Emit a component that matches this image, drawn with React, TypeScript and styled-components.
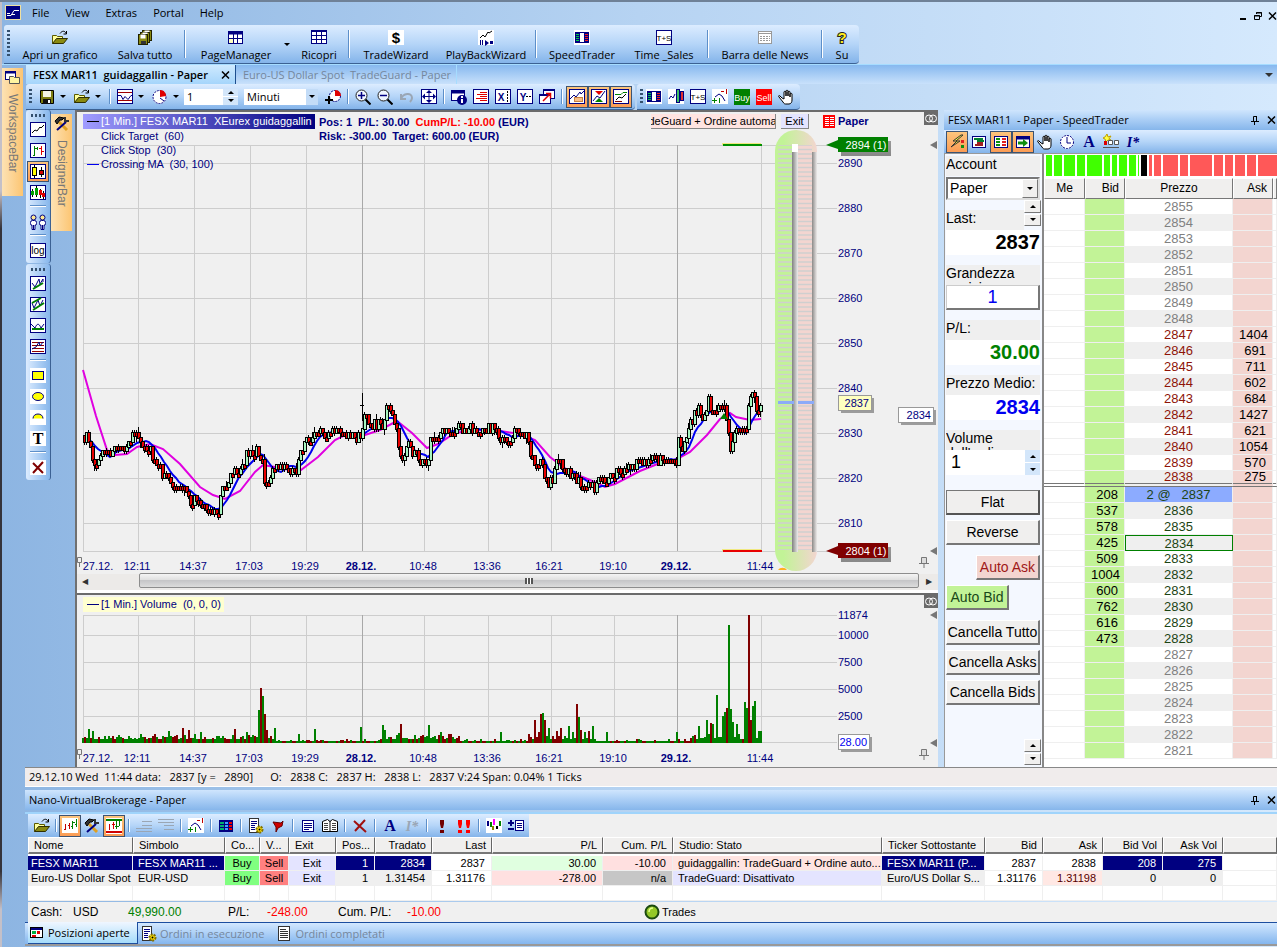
import React from 'react';
import styled, { createGlobalStyle, css } from 'styled-components';

const NAVY = '#000080';
const UI = '"Open Sans", "Noto Sans", sans-serif';
const ARIAL = '"Liberation Sans", Arial, sans-serif';
const BAR = 'linear-gradient(#dcecff, #b5d5f8 50%, #84b4ea)';
const CAPTION = 'linear-gradient(#cfe5fd, #a9cdf5 50%, #86b6eb)';
const HOT = 'linear-gradient(#fdc57c, #fb9c55)';

const Global = createGlobalStyle`
  *, *::before, *::after { box-sizing: border-box; }
  html, body { margin: 0; background: #8db5e2; }
  button, input, select { font: inherit; color: inherit; margin: 0; padding: 0; border: 0; border-radius: 0; background: none; }
  button { display: block; }
  svg { display: block; flex: none; }
`;

/* ---------- icons ---------- */

const Frame = () => <rect x="0.5" y="0.5" width="15" height="14" fill="#fff" stroke={NAVY} />;
const White = () => <rect width="16" height="15" fill="#fff" />;
const Depth = () => (
  <>
    <rect x="1" y="2" width="14" height="11" fill={NAVY} />
    <rect x="6" y="3" width="4" height="9" fill="#fff" />
    <path d="M2 4.500h3M2 6.500h3M2 8.500h3M2 10.500h3" stroke="#00d040" />
    <path d="M11 4.500h3M11 6.500h3M11 8.500h3M11 10.500h3" stroke="#f02020" />
  </>
);
const Glyph = ({ x = 8, y = 12, size = 12, fill = '#000', w = 'bold', f = ARIAL, i = false, children }: {
  x?: number; y?: number; size?: number; fill?: string; w?: string; f?: string; i?: boolean; children: string;
}) => (
  <text x={x} y={y} fontSize={size} fill={fill} fontWeight={w} fontFamily={f} fontStyle={i ? 'italic' : 'normal'} textAnchor="middle">{children}</text>
);
const SERIF = '"Liberation Serif", serif';
const Folder = () => (
  <>
    <path d="M0.500 13.500V5.500h4l1 1h5v2" fill="#ffff9c" stroke="#5a5a00" />
    <path d="M0.500 13.500l4-5h11l-4 5z" fill="#8a8a10" stroke="#2e2e00" />
    <path d="M8 3.500c2-3 5-3 6 0M14.500 1v3h-3" fill="none" stroke="#000" />
  </>
);
const Hand = () => (
  <path d="M4 9L2 7c-1-1-2 0-1 1l4 5c1 2 2 2 3 2h3c2 0 3-2 3-4V5c0-1-2-1-2 0v3V3c0-1-2-1-2 0v4V2c0-1-2-1-2 0v5V3c0-1-2-1-2 0v7z" fill="#fff" stroke="#000" />
);
const Zig = ({ c = '#000', d = 'M2 11l3-3 2 1 3-4 1 1 3-3' }) => <path d={d} fill="none" stroke={c} />;
const Gear = () => (
  <>
    <circle cx="11.500" cy="11.500" r="3" fill="#ffe000" stroke="#807000" strokeWidth="2" strokeDasharray="2 1" />
    <circle cx="11.500" cy="11.500" r="1" fill="#000" />
  </>
);
const Lens = ({ plus }: { plus: boolean }) => (
  <>
    <circle cx="6.500" cy="6.500" r="5.500" fill="#eef6ff" stroke="#222" />
    <path d={plus ? 'M3 6.500h7M6.500 3v7' : 'M3 6.500h7'} stroke={NAVY} strokeWidth="1.500" />
    <path d="M10.500 10.500l5 5" stroke="#000" strokeWidth="2" />
  </>
);
const Ticks = ({ cx, cy }: { cx: number; cy: number }) => (
  <circle cx={cx} cy={cy} r="6.500" fill="none" stroke={NAVY} strokeDasharray="2 1" />
);

const icons: Record<string, React.ReactNode> = {
  app: <><rect x="0.500" y="0.500" width="15" height="14" fill={NAVY} stroke="#f0e0a0" /><path d="M2 10.500h4l3-5h5M2 8.500h3M6 9.500h4" fill="none" stroke="#fff" /></>,
  folder: <Folder />,
  saveall: <>{[[5.5, 0.5], [3.5, 2.5], [1.5, 4.5]].map(([x, y]) => <g key={x}><rect x={x} y={y} width="9" height="10" fill="#8a8a10" stroke="#222200" /><rect x={x + 2} y={y} width="5" height="4" fill="#fff" /></g>)}<rect x="4" y="11" width="5" height="3" fill="#333" /></>,
  pages: <><rect x="0.500" y="1.500" width="14" height="12" fill="#fff" stroke={NAVY} /><path d="M0 3h15" stroke={NAVY} strokeWidth="3" /><path d="M5.500 4v9M9.500 4v9M1 8.500h14" stroke={NAVY} /><rect x="1" y="9" width="4" height="4" fill="#ffffc0" /></>,
  grid: <><rect x="0.500" y="0.500" width="15" height="13" fill="#fff" stroke={NAVY} /><path d="M0 1.500h16M5.500 0v14M10.500 0v14M0 5.500h16M0 9.500h16" stroke={NAVY} /></>,
  dollar: <><White /><Glyph y={13} size={15}>$</Glyph></>,
  playback: <><White /><Zig d="M2 8l3-3 2 2 3-5 1 1 3-2" /><path d="M2.500 10v5M4.500 10v5" stroke={NAVY} /><path d="M7 10l4 3-4 3zM12 11h3v3h-3z" fill={NAVY} /></>,
  speed: <><White /><Depth /></>,
  ts: <><Frame /><Glyph size={8} y={11} w="normal">T+S</Glyph></>,
  news: <><rect x="1.500" y="1.500" width="13" height="12" fill="#fff" stroke="#999" /><path d="M2 3.500h12" stroke="#999" /><path d="M3 6.500h10M3 8.500h10M3 10.500h10" stroke="#999" strokeDasharray="2 1" /></>,
  help: <text x="8" y="13" fontSize="15" fontWeight="bold" fontFamily={ARIAL} textAnchor="middle" fill="#ffef20" stroke="#222" strokeWidth="2" paintOrder="stroke">?</text>,
  disk: <><path d="M1.500 1.500h13v13h-12l-1-1z" fill="#7d7d10" stroke="#000" /><rect x="4" y="2" width="8" height="6" fill="#f4f4e4" /><rect x="4" y="10" width="8" height="5" fill="#111" /><rect x="9" y="11" width="2" height="3" fill="#fff" /></>,
  indic: <><Frame /><path d="M1 3.500h14M1 11.500h14" stroke="#a00000" /><Zig c={NAVY} d="M1 6.500h3l2 4 2-3 3 3 3-4h2" /></>,
  pie: <><circle cx="7.500" cy="8" r="7" fill="#fff" /><Ticks cx={7.5} cy={8} /><path d="M8 8V1c4 0 6 3 6 6z" fill="#e00000" /><path d="M8 9l4 3" stroke={NAVY} /></>,
  addpie: <><circle cx="10" cy="7" r="5.500" fill="#fff" stroke={NAVY} strokeDasharray="2 1" /><path d="M10 7V1c4 0 6 3 6 6z" fill="#e00000" /><path d="M0 11h8M4 7v8" stroke="#000" strokeWidth="2" /></>,
  zoomin: <Lens plus />,
  zoomout: <Lens plus={false} />,
  undo: <path d="M2 5v5h5M2 10c2-6 11-7 11-1 0 2-1 3-2 4" fill="none" stroke="#9aa6b4" strokeWidth="2" />,
  move: <><Frame /><path d="M8 2v11M2 7.500h12" stroke={NAVY} /><path d="M8 1l3 3H5zM8 14l-3-3h6zM1 7.500l3-3v6zM15 7.500l-3 3v-6z" fill={NAVY} /></>,
  info: <><rect x="0.500" y="1.500" width="13" height="10" fill="#fff" stroke={NAVY} /><path d="M0 3h14" stroke={NAVY} strokeWidth="3" /><circle cx="11" cy="11" r="5" fill={NAVY} /><path d="M11 7v2M11 10v4" stroke="#fff" strokeWidth="2" /></>,
  lines: <><Frame /><path d="M7 3.500h7M4 5.500h10M7 7.500h7M3 9.500h11M7 11.500h7" stroke="#e00000" /></>,
  xline: <><Frame /><Glyph x={6} y={12} size={10} fill={NAVY}>X</Glyph><path d="M12.500 2v12" stroke="#000" strokeDasharray="2 1" /></>,
  yline: <><Frame /><Glyph x={6} y={12} size={10} fill={NAVY}>Y</Glyph><path d="M9 7.500h6" stroke="#000" strokeDasharray="2 1" /></>,
  layers: <><rect x="4.500" y="0.500" width="11" height="9" fill="#fff" stroke={NAVY} /><rect x="0.500" y="5.500" width="11" height="9" fill="#fff" stroke={NAVY} /><path d="M1 6.500h11M5 1.500h11" stroke={NAVY} /><path d="M4 12l7-7M7 4.500h4.500v5" stroke="#e00000" strokeWidth="1.500" fill="none" /></>,
  target: <><Frame /><rect x="5.500" y="8.500" width="8" height="4" fill="#f8c088" stroke="#c88040" /><Zig c={NAVY} d="M1 10l4-4 2 2 4-5 1 2 3-3" /></>,
  guard: <><Frame /><path d="M4 2h8l-4 4z" fill="#e00000" /><path d="M4 13h8l-4-4z" fill="#008000" /><Zig c={NAVY} d="M2 12l4-5 3 2 5-7" /></>,
  equity: <><Frame /><path d="M2 5.500h6l2-2h4" stroke="#008000" fill="none" /><path d="M2 12.500h7" stroke="#800000" /><Zig d="M3 11l3-3 3 1 4-4" /></>,
  chartdepth: <><White /><path d="M1 10l2-3 2 2 2-4" fill="none" stroke={NAVY} /><rect x="8.500" y="0.500" width="3" height="13" fill="#40c060" stroke={NAVY} /><rect x="12.500" y="2.500" width="3" height="9" fill="#e03030" stroke={NAVY} /></>,
  plusone: <><White /><Zig c={NAVY} d="M3 8l4-3 3 2 3 5" /><path d="M0 11.500h5M2.500 9v5M7.500 9v5" stroke="#008000" /><path d="M9 2.500h3M14.500 0v5" stroke="#c00000" /></>,
  buy: <><rect width="16" height="16" fill="#008000" /><Glyph size={9} y={12} fill="#fff" w="normal">Buy</Glyph></>,
  sell: <><rect width="16" height="16" fill="#f00" /><Glyph size={9} y={12} fill="#fff" w="normal">Sell</Glyph></>,
  hand: <Hand />,
  line: <><Frame /><Zig /></>,
  bars: <><Frame /><path d="M4.500 3v10M3 12.500h1M5 5.500h2" stroke="#008000" /><path d="M7.500 4v3" stroke="#008000" /><path d="M11.500 3v9M9 5.500h2M12 8.500h2" stroke="#e00000" /></>,
  candle: <><Frame /><path d="M4.500 1v13M11.500 3v10" stroke="#000" /><rect x="2.500" y="3.500" width="4" height="8" fill="#ffff00" stroke="#000" /><rect x="9.500" y="6.500" width="4" height="4" fill="#d00000" stroke="#000" /></>,
  candles: <><Frame /><path d="M2.500 4v8M6.500 1v11M10.500 4v9M13.500 6v8" stroke="#000" /><rect x="1" y="6" width="3" height="4" fill="#00a000" /><rect x="5" y="3" width="3" height="7" fill="#00a000" /><rect x="9" y="5" width="3" height="5" fill="#e00000" /><rect x="12" y="8" width="3" height="4" fill="#e00000" /></>,
  people: <>{[3.5, 12.5].map(x => <g key={x}><circle cx={x} cy="3.500" r="2.500" fill="#ffe890" stroke={NAVY} /><rect x={x - 3} y="6.500" width="6" height="5" rx="2" fill="#fff" stroke={NAVY} /><path d={`M${x - 1.5} 11v4.500h3V11M${x} 11v4`} fill="#fff" stroke={NAVY} /></g>)}</>,
  log: <><Frame /><Glyph size={10} y={11} w="normal">log</Glyph></>,
  trend: <><Frame /><Zig c={NAVY} d="M2 7l3 4 4-8 1 5 3-5v3" /><path d="M3 13l10-6" stroke="#008000" strokeWidth="2" /></>,
  channel: <><Frame /><Zig c={NAVY} d="M2 6l2 5 4-8 2 6 3-6" /><path d="M2 6l9-5M3 13l11-7" stroke="#008000" strokeWidth="2" /></>,
  arc: <><Frame /><Zig c={NAVY} d="M1 6l4 4c2-5 4-5 6 0l3-4" /><path d="M2 11h12" stroke="#008000" strokeWidth="2" /></>,
  fib: <><Frame /><path d="M2 3.500h12M2 6.500h12M2 9.500h12M2 12.500h12" stroke="#900000" /><Zig c={NAVY} d="M2 10l4-2 3-5 1 4 3-4" /></>,
  rect: <><White /><rect x="2.500" y="3.500" width="11" height="8" fill="#ff0" stroke={NAVY} /></>,
  ellipse: <><White /><ellipse cx="8" cy="7.500" rx="5.500" ry="4" fill="#ff0" stroke={NAVY} /></>,
  half: <><White /><path d="M3 8.500c0-6 10-6 10 0z" fill="#ff0" /><path d="M3 8.500c0-6 10-6 10 0" fill="none" stroke={NAVY} /></>,
  text: <><White /><Glyph size={16} y={13} f={SERIF}>T</Glyph></>,
  del: <><White /><path d="M3 3l10 10M13 2L3 13" stroke="#800000" strokeWidth="2" /></>,
  delbare: <path d="M2 3l12 11M13 2L3 13" stroke="#a01010" strokeWidth="2" />,
  hammer: <><path d="M5 6l8 8" stroke="#e0a020" strokeWidth="3" /><path d="M12 6L3 14" stroke={NAVY} strokeWidth="2" /><path d="M1 5l4-4 5 1-2 2-2 0-3 4z" fill="#333" stroke="#000" /><path d="M11 1v4h4" fill="none" stroke="#333" strokeWidth="2" /></>,
  bolt: <><path d="M12 1L4 7h4l-6 6 9-6H7l7-6z" fill="#ffff40" stroke="#333" /><rect x="12" y="6" width="3" height="3" fill="#e02020" /><rect x="12" y="11" width="3" height="3" fill="#109010" /></>,
  flagdoc: <><rect x="1.500" y="2.500" width="13" height="11" fill="#fff" stroke={NAVY} /><path d="M3 5h9M6 7h7" stroke="#008030" strokeWidth="2" /><path d="M6 9h6M4 11h8" stroke="#a02020" strokeWidth="2" /></>,
  docgrid: <><rect x="1.500" y="2.500" width="13" height="11" fill="#fff" stroke={NAVY} /><path d="M3 5h4M3 8h4M3 11h4" stroke="#109010" strokeWidth="2" /><path d="M9 5h4M9 8h4M9 11h4" stroke="#e02020" strokeWidth="2" /></>,
  arrowbox: <><rect x="1.500" y="2.500" width="13" height="11" fill="#fff" stroke={NAVY} /><path d="M1 4h14" stroke={NAVY} strokeWidth="3" /><path d="M3 9h6" stroke="#109010" strokeWidth="3" /><path d="M8 5l5 4-5 4z" fill="#109010" /></>,
  clock: <><circle cx="8" cy="8" r="7" fill="#fff" /><Ticks cx={8} cy={8} /><path d="M8 3v6h4" fill="none" stroke={NAVY} /></>,
  fontA: <Glyph size={16} y={13} f={SERIF} fill={NAVY}>A</Glyph>,
  istar: <Glyph size={14} y={13} f={SERIF} fill={NAVY} i>I*</Glyph>,
  istaroff: <Glyph size={14} y={13} f={SERIF} fill="#9aa6b4" i>I*</Glyph>,
  alarm: <><path d="M4 0l1 3 3-1-2 3 2 1-3 0-2 2-1-3-2-1 2-1z" fill="#ffff40" stroke="#c0a000" /><rect x="1" y="7" width="3" height="4" fill="#d00" /><path d="M5.500 6.500h4v4h-4zM11.500 6.500h4v4h-4zM0 13.500h16" fill="#fff" stroke="#555" /></>,
  chartwin: <><White /><path d="M3.500 6v6M2 11.500h1M7.500 5v6M6 7.500h1" stroke="#c00000" /><path d="M10.500 3v8M9 8.500h1M14.500 1v8M13 6.500h1M11 4.500h2" stroke="#008000" /></>,
  chartred: <><rect width="16" height="16" fill="#fff" /><path d="M0 2h16" stroke="#008000" strokeWidth="2" /><path d="M0 14h16" stroke="#d00000" strokeWidth="2" /><path d="M3.500 6v6M7.500 4v7M6 6.500h3" stroke="#d00000" /><path d="M10.500 3v8M13.500 3v5M9 8.500h4" stroke="#008000" /></>,
  rowsdn: <path d="M6 3.500h10M6 7.500h10M0 10.500h16M0 13.500h16" stroke="#9aa6b4" />,
  rowsup: <path d="M0 1.500h16M0 4.500h16M6 7.500h10M6 11.500h10" stroke="#9aa6b4" />,
  table3: <><rect x="1" y="2" width="14" height="12" fill={NAVY} /><path d="M2 5h4M2 8h4M2 11h4" stroke="#00b070" strokeWidth="2" /><path d="M7 5h3M7 8h3M7 11h3" stroke="#40a0ff" strokeWidth="2" /><path d="M11 5h3M11 8h3M11 11h3" stroke="#f00000" strokeWidth="2" /></>,
  listgear: <><rect x="1.500" y="0.500" width="9" height="14" fill="#fff" stroke="#333" /><path d="M3 3.500h6M3 5.500h6M3 7.500h4M3 9.500h4M3 11.500h4" stroke={NAVY} /><Gear /></>,
  flag: <path d="M3 4l8 1 2-2-1 5-4 2-2 4 0-5z" fill="#d00000" stroke="#600" />,
  list: <><rect x="2.500" y="2.500" width="11" height="11" fill="#fff" stroke={NAVY} /><path d="M4 5.500h8M4 7.500h8M4 9.500h8M4 11.500h5" stroke={NAVY} /></>,
  book: <><path d="M0.500 3.500l5-2 2.500 2 2.500-2 5 2v10H0.500zM8 3v11" fill="#fff" stroke="#000" /><path d="M2 5.500h4M2 7.500h4M2 9.500h4M2 11.500h4M10 5.500h4M10 7.500h4M10 9.500h4M10 11.500h4" stroke="#444" /></>,
  ex1: <><path d="M6 2h4v4l-1 4H7L6 6z" fill="#700000" /><rect x="6" y="12" width="4" height="3" fill="#700000" /></>,
  ex2: <>{[2, 10].map(x => <path key={x} d={`M${x} 2h4v4l-1 4h-2l-1-4zM${x} 12h4v3h-4z`} fill="#f00" />)}</>,
  wave: <><White /><path d="M2 3v5" stroke={NAVY} strokeWidth="2" /><path d="M5 4v5" stroke="#008000" strokeWidth="2" /><path d="M7 8v4" stroke="#908000" strokeWidth="2" /><path d="M8 1v6" stroke="#f0f" strokeWidth="2" /><path d="M11 8v3" stroke="#000" strokeWidth="2" /><path d="M14 3v5" stroke="#008000" strokeWidth="2" /></>,
  pmlist: <><path d="M0 5h6M3 2v6M0 11h6" stroke={NAVY} strokeWidth="2" /><rect x="7.500" y="2.500" width="8" height="10" fill="#fff" stroke={NAVY} /><path d="M9 5.500h5M9 7.500h5M9 9.500h5" stroke={NAVY} /></>,
  posz: <><rect x="1.500" y="2.500" width="12" height="10" fill="#fff" stroke="#000" /><rect x="2" y="3" width="11" height="2" fill={NAVY} /><rect x="3" y="6" width="4" height="3" fill="#00b040" /><rect x="8" y="6" width="3" height="3" fill="#e00000" /><rect x="3" y="10" width="4" height="2" fill="#e00000" /></>,
  doc: <><rect x="2.500" y="0.500" width="11" height="14" fill="#fff" stroke="#333" /><path d="M4 3.500h6M4 5.500h8M4 7.500h8M4 9.500h8M4 11.500h8" stroke="#333" /></>,
  chip: <><rect x="1" y="1" width="12" height="13" fill="#f00" /><path d="M3 3.500h4M3 5.500h4M3 7.500h4M3 9.500h4M3 11.500h4M8 3.500h4M8 5.500h4M8 7.500h4M8 9.500h4M8 11.500h4" stroke="#fff" /></>,
  window: <><rect x="0.500" y="1.500" width="10" height="8" fill="#fff" stroke={NAVY} /><path d="M0 2.500h11" stroke={NAVY} strokeWidth="2" /><path d="M4.500 13.500v-7h4l1 1h5v6z" fill="#fff4a0" stroke="#555" /></>,
};

const Icon = ({ name, size = 16 }: { name: string; size?: number }) => (
  <svg width={size} height={size} viewBox={`0 0 ${size} ${size}`} aria-hidden="true">{icons[name]}</svg>
);

/* ---------- frame ---------- */

const Page = styled.div`
  min-height: 100vh;
  display: flex;
  flex-direction: column;
  border-top: 2px solid #6f8197;
  padding-left: 2px;
  background:
    linear-gradient(#c4c0c8 20%, #35333a 24% 92%, #c4c0c8 96%) left / 2px 100% no-repeat,
    linear-gradient(90deg, #8db5e2, #b6d3f2 50%, #d5e9fd);
  font: 11px/15px ${UI};
  color: #000;
`;
const MenuBar = styled.header`
  display: flex;
  align-items: center;
  height: 23px;
  padding: 0 0 1px 3px;
  gap: 3px;
`;
const Menu = styled.nav`
  display: flex;
  flex: 1;
  button { padding: 0 8px; line-height: 20px; }
`;
const WinButtons = styled.div`
  display: flex;
  gap: 5px;
  padding-top: 6px;
`;
const BigBar = styled.div`
  display: flex;
  align-items: stretch;
  align-self: flex-start;
  height: 39px;
  margin-left: 2px;
  padding: 0 1px 0 3px;
  background: ${BAR};
  border-bottom: 1px solid #3b6193;
  border-radius: 3px 4px 4px 0;
`;
const Grip = styled.i<{ $flat?: boolean }>`
  flex: none;
  ${p => p.$flat
    ? css`width: 14px; height: 3px; margin: 3px 5px 2px; background: repeating-linear-gradient(90deg, #34506e 0 2px, transparent 2px 4px);`
    : css`width: 3px; margin: 5px 0; background: repeating-linear-gradient(#34506e 0 2px, transparent 2px 4px);`}
`;
const BigButton = styled.button<{ $w: number }>`
  display: flex;
  flex-direction: column;
  align-items: center;
  gap: 1px;
  width: ${p => p.$w}px;
  padding-top: 5px;
  line-height: 15px;
  white-space: nowrap;
`;
const Rule = styled.i<{ $gap?: number }>`
  flex: none;
  width: 2px;
  margin: 5px ${p => p.$gap ?? 3}px;
  background: linear-gradient(90deg, #5d8fc9 50%, #fff 50%);
`;
const Caret = styled.i<{ $l?: number; $r?: number; $size?: number; $c?: string }>`
  flex: none;
  align-self: center;
  border: ${p => p.$size ?? 3}px solid transparent;
  border-top-color: ${p => p.$c ?? '#000'};
  border-bottom: 0;
  margin: 0 ${p => p.$r ?? 5}px 0 ${p => p.$l ?? 2}px;
`;
const Body = styled.div`
  flex: 1;
  display: flex;
  border-top: 1px solid #a6dcff;
`;
const Side = styled.aside`
  flex: none;
  width: 23px;
  padding-top: 3px;
`;
const VTab = styled.button<{ $h: number }>`
  display: flex;
  flex-direction: column;
  align-items: center;
  gap: 8px;
  width: 21px;
  height: ${p => p.$h}px;
  padding-top: 2px;
  background: linear-gradient(90deg, #fde2b4, #fcc572);
  color: #777;
  font: 12px/16px ${ARIAL};
  span { writing-mode: vertical-rl; }
`;
const Work = styled.main`
  flex: 1;
  min-width: 0;
  display: flex;
  flex-direction: column;
`;
const TabStrip = styled.div`
  display: flex;
  align-items: stretch;
  height: 19px;
  margin-left: 1px;
  padding-right: 2px;
  background: linear-gradient(#86b8ef, #c9e1fb);
  white-space: pre;
`;
const Tab = styled.button<{ $on?: boolean }>`
  display: flex;
  align-items: center;
  justify-content: space-between;
  padding: 0 5px 0 7px;
  ${p => p.$on
    ? css`width: 210px; font-weight: 600; background: linear-gradient(#cfeaff, #a5d5fb); border-right: 1px solid #1d4e8f; color: #000;`
    : css`color: #75879d; border-right: 1px solid #a6dcff;`}
`;
const Fill = styled.span`flex: 1;`;
const Space = styled.span`flex: 0 0 4px;`;
const Track = styled.span`flex: 0 1 47px;`;
const ToolRow = styled.div`
  display: flex;
  gap: 2px;
  height: 26px;
  margin-left: 1px;
`;
const ToolBar = styled.div`
  display: flex;
  align-items: stretch;
  padding: 0 3px;
  background: ${BAR};
  border-bottom: 1px solid #3b6193;
  border-radius: 3px 4px 4px 0;
`;
const Tool = styled.button<{ $on?: boolean; $h?: number }>`
  flex: none;
  display: flex;
  align-items: center;
  justify-content: center;
  width: 22px;
  height: ${p => p.$h ?? 22}px;
  align-self: center;
  ${p => p.$on && css`background: ${HOT}; border: 1px solid #3c5372;`}
`;
const Field = styled.div<{ $w: number; $ml?: number }>`
  display: flex;
  align-self: center;
  width: ${p => p.$w}px;
  height: 16px;
  margin-left: ${p => p.$ml ?? 0}px;
  background: #fff;
  input, select { flex: 1; min-width: 0; padding-left: 3px; appearance: none; outline: 0; }
`;
const Steps = styled.div<{ $w?: number; $raised?: boolean }>`
  flex: none;
  display: flex;
  flex-direction: column;
  gap: 1px;
  width: ${p => p.$w ?? 15}px;
  button {
    flex: 1;
    display: flex;
    align-items: center;
    justify-content: center;
    background: #d3e6fa;
    ${p => p.$raised && css`background: #f0efee; border: 1px solid #fff; border-right: 1px solid #777; border-bottom: 1px solid #777;`}
  }
`;
const Tri = styled.i<{ $up?: boolean }>`
  border: 3px solid transparent;
  ${p => p.$up ? css`border-bottom-color: #000; border-top: 0;` : css`border-top-color: #000; border-bottom: 0;`}
`;
const DropMark = styled.span`
  display: flex;
  align-items: center;
  justify-content: center;
  width: 12px;
  background: #c3dcf7;
`;
const Middle = styled.div`
  display: flex;
  align-items: stretch;
`;
const ToolCol = styled.div`
  flex: none;
  width: 25px;
  margin-left: 1px;
  display: flex;
  flex-direction: column;
`;
const ToolStack = styled.div`
  display: flex;
  flex-direction: column;
  padding: 1px 0 2px;
  margin-bottom: 1px;
  background: linear-gradient(90deg, #dcecff, #86b6eb);
  border-right: 1px solid #3b6193;
  border-radius: 3px;
  hr { width: 16px; margin: 2px 4px 4px; border: 0; border-top: 1px solid #5d8fc9; border-bottom: 1px solid #fff; }
`;
const Designer = styled.div`
  flex: none;
  width: 24px;
  padding-top: 4px;
`;

/* ---------- chart ---------- */

const ChartCol = styled.section`
  flex: 1;
  min-width: 0;
  border-left: 2px solid #707070;
  background: #f0f0f0;
`;
const Pane = styled.div`
  position: relative;
  border-top: 2px solid #6b6b6b;
  overflow: hidden;
`;
const Canvas = styled.svg<{ $h: number }>`
  width: 100%;
  height: ${p => p.$h}px;
  font: 11px ${ARIAL};
  fill: ${NAVY};
`;
const Overlay = styled.div`
  position: absolute;
  top: 2px;
  left: 6px;
  right: 0;
  display: flex;
  align-items: flex-start;
  font: 11px/14px ${ARIAL};
  color: ${NAVY};
  white-space: pre;
`;
const Legend = styled.ul`
  list-style: none;
  margin: 0;
  padding: 0;
  li { display: flex; padding-left: 18px; }
`;
const Key = styled.i<{ $c: string }>`
  align-self: center;
  width: 12px;
  height: 1px;
  margin-left: -14px;
  margin-right: 2px;
  background: ${p => p.$c};
`;
const LegendHead = styled.li`
  width: 232px;
  line-height: 15px;
  background: linear-gradient(90deg, #a09cff, #000080);
  color: #fff;
`;
const VolumeKey = styled.li`
  width: 141px;
  line-height: 15px;
  background: #ffffd0;
`;
const Stats = styled.div`
  flex: 1;
  min-width: 0;
  padding: 1px 0 0 4px;
  font-weight: bold;
  em { font-style: normal; color: #f00; }
`;
const Strategy = styled.div`
  display: flex;
  justify-content: center;
  width: 125px;
  overflow: hidden;
  background: #ffe4e1;
  border-right: 1px solid #888;
  border-bottom: 1px solid #888;
  color: #000;
`;
const ExitBtn = styled.button`
  width: 28px;
  height: 15px;
  margin: 0 13px 0 5px;
  background: #e4e4ff;
  border-right: 1px solid #888;
  border-bottom: 1px solid #888;
  color: #000;
`;
const Broker = styled.div`
  display: flex;
  gap: 2px;
  width: 102px;
  font-weight: bold;
`;
const LinkMark = styled.button`
  width: 14px;
  height: 13px;
  background: #6b6b6b;
  margin-top: -2px;
`;
const ScrollBar = styled.div`
  display: flex;
  align-items: center;
  height: 19px;
  padding-bottom: 3px;
  background: #eceae8;
  border-bottom: 3px solid #fff;
`;
const ScrollEnd = styled.button<{ $w: number }>`
  width: ${p => p.$w}px;
  font-size: 8px;
  line-height: 14px;
  color: #333;
`;
const Thumb = styled.div`
  flex: 1;
  height: 15px;
  display: flex;
  align-items: center;
  justify-content: center;
  border: 1px solid #8d8d8d;
  border-radius: 2px;
  background: linear-gradient(#f4f4f4, #e0e0e0 45%, #c6c6c8 50%, #dcdcdc);
  &::after { content: ''; width: 8px; height: 6px; background: repeating-linear-gradient(90deg, #555 0 2px, #fff 2px 3px); }
`;

const rng = (seed: number) => () => {
  seed = (seed * 1103515245 + 12345) % 2147483648;
  return seed / 2147483648;
};
const at = (pts: number[][], x: number) => {
  const i = pts.findIndex(p => p[0] >= x);
  if (i <= 0) return pts[i === 0 ? 0 : pts.length - 1][1];
  const [a, b] = [pts[i - 1], pts[i]];
  return a[1] + ((b[1] - a[1]) * (x - a[0])) / (b[0] - a[0]);
};
const price = [[83,440],[87,436],[90,445],[93,465],[96,464],[99,455],[104,452],[110,455],[116,446],[120,445],[124,453],[130,442],[134,436],[138,436],[143,445],[149,450],[153,460],[158,463],[162,475],[168,480],[173,486],[183,488],[190,502],[196,500],[200,508],[206,508],[212,512],[217,512],[222,490],[227,480],[231,472],[240,470],[246,456],[250,450],[259,452],[262,465],[265,482],[270,480],[275,465],[280,462],[285,466],[291,470],[296,470],[299,457],[303,447],[306,441],[312,437],[316,427],[320,433],[332,433],[336,430],[342,434],[350,438],[358,438],[361,432],[363,420],[374,422],[383,425],[386,400],[389,412],[396,430],[398,444],[401,462],[405,450],[410,445],[414,455],[420,460],[425,463],[428,455],[431,430],[434,437],[440,432],[445,428],[455,432],[460,427],[472,430],[484,430],[490,428],[495,430],[500,438],[510,440],[515,430],[520,435],[528,438],[531,460],[541,465],[545,480],[548,486],[552,478],[558,460],[561,465],[565,478],[570,473],[576,478],[580,485],[590,489],[595,488],[600,480],[605,485],[610,478],[616,472],[628,468],[640,464],[655,460],[670,458],[676,466],[678,440],[682,446],[686,436],[690,425],[694,412],[698,410],[701,424],[704,412],[708,400],[712,414],[716,406],[724,410],[727,420],[730,447],[734,434],[742,428],[746,430],[748,402],[751,396],[754,400],[757,410],[761,402]];
const slow = [[83,370],[96,416],[107,450],[115,455],[127,454],[137,447],[150,444],[163,449],[180,464],[200,487],[213,495],[225,499],[240,491],[255,472],[263,465],[275,467],[290,470],[301,470],[318,457],[335,440],[345,435],[362,436],[380,430],[397,421],[412,433],[427,448],[438,444],[455,433],[475,430],[500,431],[520,434],[535,440],[550,457],[570,472],[590,480],[605,487],[615,484],[640,471],[660,463],[677,459],[690,452],[707,435],[720,419],[730,413],[736,417],[750,420],[761,419]];

const snap = (y: number) => Math.round(163 + Math.round((y - 163) / 4.5) * 4.5);
const candles = (() => {
  const r = rng(11);
  const out: { x: number; top: number; h: number; up: boolean; hi: number; lo: number }[] = [];
  let open = 436;
  for (let x = 84; x < 762; x += 2) {
    const close = snap(at(price, x) + (r() - 0.5) * 10);
    const top = Math.min(open, close);
    const h = Math.max(Math.abs(close - open), 3);
    out.push({ x, top, h, up: close < open, hi: top - Math.floor(r() * 2.2) * 3, lo: top + h + Math.floor(r() * 2.2) * 3 });
    open = close;
  }
  return out;
})();
const fast = (() => {
  const pts: string[] = [];
  for (let x = 83; x < 762; x += 3) {
    let s = 0;
    for (let k = 0; k < 8; k++) s += at(price, Math.max(83, x - k * 2.5));
    pts.push(`${x},${Math.round(s / 8)}`);
  }
  return pts.join(' ');
})();

const spikes: Record<number, [number, string]> = {
  89: [13, 'g'], 93: [11, 'g'], 169: [11, 'g'], 183: [14, 'r'], 189: [12, 'r'], 201: [10, 'g'], 235: [13, 'r'], 247: [10, 'g'], 259: [32, 'g'], 261: [54, 'r'], 263: [46, 'g'], 265: [28, 'r'], 267: [12, 'r'], 275: [14, 'g'],
  299: [8, 'g'], 315: [13, 'g'], 361: [15, 'g'], 383: [17, 'g'], 385: [12, 'g'], 401: [18, 'r'], 429: [17, 'g'], 441: [10, 'g'], 501: [10, 'g'], 535: [22, 'r'], 541: [28, 'r'], 543: [29, 'g'], 545: [22, 'r'], 549: [14, 'g'], 561: [14, 'r'], 569: [16, 'g'],
  577: [38, 'r'], 579: [25, 'g'], 581: [12, 'r'], 589: [11, 'r'], 593: [16, 'g'], 607: [10, 'g'], 677: [10, 'g'], 699: [16, 'g'], 707: [22, 'g'], 711: [19, 'r'], 713: [18, 'g'], 717: [47, 'g'], 723: [26, 'g'], 725: [30, 'g'], 727: [34, 'r'], 729: [117, 'g'], 731: [33, 'g'], 733: [20, 'g'], 737: [18, 'g'],
  745: [40, 'g'], 747: [34, 'g'], 749: [127, 'r'], 751: [22, 'r'], 753: [36, 'g'], 755: [41, 'g'], 759: [11, 'g'], 761: [11, 'g'],
};
const calm = (x: number) => (x > 276 && x < 380) || (x > 596 && x < 690) || (x > 460 && x < 528);
const volumes = (() => {
  const r = rng(5);
  const out: { x: number; h: number; g: boolean }[] = [];
  for (let x = 83; x < 763; x += 2) {
    const s = spikes[x];
    const big = (x > 700 || (x > 530 && x < 590)) ? 13 : calm(x) ? 3 : 8;
    const h = 1 + Math.floor(r() * r() * big + (calm(x) ? 0 : 2));
    const g = r() > 0.3;
    out.push(s ? { x, h: s[0], g: s[1] === 'g' } : { x, h, g });
  }
  return out;
})();

const times: [number, string, boolean?][] = [[98, '27.12.'], [137, '12:11'], [193, '14:37'], [249, '17:03'], [305, '19:29'], [361, '28.12.', true], [423, '10:48'], [487, '13:36'], [549, '16:21'], [613, '19:10'], [676, '29.12.', true], [760, '11:44']];
const columns = [83, 138, 194, 250, 306, 362, 424, 488, 551, 614, 677, 761];

const TimeAxis = ({ y }: { y: number }) => (
  <>
    {times.map(([x, t, b]) => <text key={t} x={x} y={y} textAnchor="middle" fontWeight={b ? 'bold' : 'normal'}>{t}</text>)}
    <path d={`M77.500 ${y - 12.5}h4v5h-4zM79.500 ${y - 7}v4`} fill="none" stroke="#777" />
    <path d={`M921.500 ${y - 12.5}h5v6h-5zM919 ${y - 6.5}h10M924 ${y - 6}v4`} fill="#ddd" stroke="#777" />
  </>
);
const Grid = ({ top, bottom, rows }: { top: number; bottom: number; rows: number[] }) => (
  <g shapeRendering="crispEdges">
    {rows.map(y => <rect key={y} x="83" y={y} width="754" height="1" fill="#cdcdcd" />)}
    {columns.map(x => <rect key={x} x={x} y={top} width="1" height={bottom - top} fill={x === 362 || x === 677 ? '#a8a8a8' : '#cdcdcd'} />)}
  </g>
);
const EdgeMark = ({ y }: { y: number }) => <path d={`M930 ${y}l7-4v8z`} fill="#777" />;
const ArrowTag = ({ y, fill, children }: { y: number; fill: string; children: string }) => (
  <>
    <path d={`M841 ${y - 4}h50v15h-50z`} fill="url(#drop)" />
    <path d={`M826 ${y}l12-5v-3h50v15h-50v-3z`} fill={fill} />
    <text x="866" y={y + 4} fill="#fff" textAnchor="middle">{children}</text>
  </>
);
const ValueTag = ({ x, y, w, fill, ink, children }: { x: number; y: number; w: number; fill: string; ink?: string; children: string }) => (
  <>
    <rect x={x + 3} y={y + 3} width={w} height="15" fill="#000" opacity="0.35" />
    <rect x={x} y={y} width={w} height="15" fill={fill} stroke="#999" strokeWidth="1" shapeRendering="crispEdges" />
    <text x={x + w - 2} y={y + 12} textAnchor="end" fill={ink ?? NAVY}>{children}</text>
  </>
);

const PriceCanvas = () => (
  <Canvas $h={462} role="img" aria-label="Price chart">
    <defs>
      <linearGradient id="pill"><stop offset="0.2" stopColor="#c2f397" /><stop offset="1" stopColor="#f3d5d0" /></linearGradient>
      <linearGradient id="shade"><stop offset="0" stopColor="#808080" /><stop offset="1" stopColor="#ececec" /></linearGradient>
      <linearGradient id="drop" x2="0" y2="1"><stop offset="0" stopColor="#999" /><stop offset="1" stopColor="#888" /></linearGradient>
      <pattern id="rungs" width="20" height="9" patternUnits="userSpaceOnUse"><path d="M0 1h20M0 5.500h20" stroke="#cfcfcf" strokeWidth="1.500" /></pattern>
    </defs>
    <g transform="translate(-77 -112)">
      <Grid top={145} bottom={551} rows={[145, 163, 208, 253, 298, 343, 388, 433, 478, 523, 551]} />
      <path d="M722 144h39" stroke="#f0e880" strokeWidth="2" />
      <path d="M723 145h39" stroke="#009000" strokeWidth="2" />
      <path d="M722 550h39" stroke="#f0e880" strokeWidth="2" />
      <path d="M723 551h39" stroke="#e80000" strokeWidth="2" />
      <polyline points={slow.map(p => p.join(',')).join(' ')} fill="none" stroke="#e000e0" strokeWidth="2" />
      <polyline points={fast} fill="none" stroke="#0000f0" strokeWidth="2" />
      <g shapeRendering="crispEdges">
        {candles.map(c => (
          <g key={c.x}>
            <rect x={c.x} y={c.hi} width="1" height={c.lo - c.hi} fill="#000" />
            <rect x={c.x - 1} y={c.top - 1} width="4" height={c.h + 2} fill="#000" />
            <rect x={c.x} y={c.top} width="2" height={c.h} fill={c.up ? '#a8f5c0' : '#e80000'} />
          </g>
        ))}
        <path d="M362 393h1v28h-1zM360 405h4v1h-4z" fill="#000" />
      </g>
      <path d="M720 419l4-6 4 6z" fill="#008000" />
      <rect x="775" y="130" width="42" height="441" rx="21" fill="url(#pill)" />
      <rect x="792" y="152" width="6" height="400" fill="url(#shade)" />
      <rect x="792" y="144" width="6" height="8" fill="#fff" />
      <rect x="812" y="152" width="5" height="400" fill="url(#shade)" opacity="0.9" />
      <rect x="778" y="145" width="14" height="405" fill="#c2f397" />
      <rect x="798" y="145" width="14" height="405" fill="#f3d5d0" />
      <path d="M778 145h14v405h-14zM798 145h14v405h-14z" fill="url(#rungs)" />
      <rect x="778" y="401" width="16" height="3" fill="#8cabf8" />
      <rect x="798" y="401" width="16" height="3" fill="#8cabf8" />
      <path d="M778 570a5 4 0 0 1 9 0z" fill="#ffb020" />
      {[2890, 2880, 2870, 2860, 2850, 2840, 2830, 2820, 2810].map((v, i) => <text key={v} x="838" y={167 + i * 45}>{v}</text>)}
      <ArrowTag y={145} fill="#008000">2894 (1)</ArrowTag>
      <ArrowTag y={551} fill="#800000">2804 (1)</ArrowTag>
      <ValueTag x={838} y={395} w={33} fill="#ffffc0">2837</ValueTag>
      <ValueTag x={898} y={407} w={35} fill="#fff">2834</ValueTag>
      <EdgeMark y={145} />
      <EdgeMark y={551} />
      <TimeAxis y={570} />
    </g>
  </Canvas>
);

const VolumeCanvas = () => (
  <Canvas $h={172} role="img" aria-label="Volume chart">
    <g transform="translate(-77 -595)">
      <Grid top={615} bottom={742} rows={[615, 635, 662, 689, 716, 742]} />
      <g shapeRendering="crispEdges">
        {volumes.map(v => <rect key={v.x} x={v.x - 1} y={742 - v.h} width="2" height={v.h + 1} fill={v.g ? '#008000' : '#800000'} />)}
      </g>
      {([[11874, 619], [10000, 639], [7500, 666], [5000, 693], [2500, 720]]).map(([v, y]) => <text key={v} x="838" y={y}>{v}</text>)}
      <ValueTag x={838} y={734} w={31} fill="#fff" ink="#0000f0">28.00</ValueTag>
      <EdgeMark y={615} />
      <EdgeMark y={743} />
      <TimeAxis y={762} />
    </g>
  </Canvas>
);
const LinkIcon = () => (
  <svg width="14" height="13" fill="none" stroke="#fff"><circle cx="5" cy="6.500" r="3.500" /><circle cx="9" cy="6.500" r="3.500" /></svg>
);

/* ---------- speed trader ---------- */

const Trader = styled.section`
  flex: none;
  width: 333px;
  margin-left: 6px;
  background: #f4f8ff;
`;
const Caption = styled.h2`
  display: flex;
  align-items: center;
  gap: 8px;
  height: 20px;
  margin: 0;
  padding: 0 1px 0 4px;
  font-size: 11px;
  line-height: 18px;
  font-weight: normal;
  white-space: pre;
  background: ${CAPTION};
`;
const TraderTools = styled.div`
  display: flex;
  height: 23px;
  padding: 0 2px;
  background: ${BAR};
`;
const TraderBody = styled.div`
  display: flex;
  border-top: 1px solid #999;
  height: 614px;
`;
const Order = styled.form`
  width: 100px;
  padding: 2px 2px 2px 1px;
  border-right: 2px solid #888;
  border-left: 1px solid #999;
  display: flex;
  flex-direction: column;
  font: 14px/15px ${ARIAL};
  color: #000;
`;
const OLabel = styled.label<{ $top?: number }>`
  flex: none;
  display: block;
  height: 20px;
  margin-top: ${p => p.$top ?? 10}px;
  padding-top: 1px;
  overflow: hidden;
  background: #efefef;
`;
const Combo = styled.div`
  display: flex;
  height: 23px;
  margin-top: 1px;
  border: 2px solid #777;
  border-right-color: #ddd;
  border-bottom-color: #ddd;
  background: #fff;
  select { flex: 1; min-width: 0; appearance: none; padding-left: 2px; outline: 0; }
`;
const ComboMark = styled.span`
  display: flex;
  align-items: center;
  justify-content: center;
  width: 16px;
  background: #f0efee;
  border: 1px solid #fff;
  border-right-color: #777;
  border-bottom-color: #777;
`;
const StepRow = styled.div`
  display: flex;
  align-items: flex-end;
  justify-content: space-between;
  height: 30px;
  label { flex: 1; }
`;
const Value = styled.output<{ $c: string }>`
  flex: none;
  display: block;
  height: 25px;
  background: #fff;
  color: ${p => p.$c};
  font-size: 20px;
  line-height: 24px;
  font-weight: bold;
  text-align: right;
`;
const raised = css`
  border: 1px solid #fff;
  border-right: 2px solid #777;
  border-bottom: 2px solid #777;
`;
const SizeBtn = styled.button`
  flex: none;
  height: 25px;
  background: #fff;
  color: #0000f0;
  font-size: 18px;
  line-height: 20px;
  ${raised}
  border-top-color: #ccc;
  border-left-color: #ccc;
`;
const VolRow = styled.div`
  display: flex;
  height: 25px;
  background: #fff;
  font-size: 18px;
  input { flex: 1; min-width: 0; padding-left: 5px; background: #fff; outline: 0; }
`;
const Act = styled.button<{ $bg?: string; $c?: string; $w?: number; $right?: boolean; $top?: number; $dark?: boolean }>`
  flex: none;
  width: ${p => (p.$w ? p.$w + 'px' : '100%')};
  height: 25px;
  margin-top: ${p => p.$top ?? 5}px;
  align-self: ${p => (p.$right ? 'flex-end' : 'flex-start')};
  background: ${p => p.$bg ?? '#f0efee'};
  color: ${p => p.$c ?? '#000'};
  white-space: nowrap;
  ${raised}
  ${p => p.$dark && css`border: 1px solid #777; border-right: 2px solid #555; border-bottom: 2px solid #555;`}
`;
const Ladder = styled.div`
  flex: 1;
  background: #fff;
  overflow: hidden;
`;
const LadderTable = styled.table`
  width: 100%;
  margin-top: 1px;
  table-layout: fixed;
  border-collapse: separate;
  border-spacing: 0;
  font: 13px/13px ${ARIAL};
  color: #000;
  th {
    height: 21px;
    padding: 0;
    font-size: 12px;
    font-weight: normal;
    background: #f0efee;
    border: 1px solid #fff;
    border-right-color: #777;
    border-bottom-color: #777;
  }
  th:nth-child(2), th:nth-child(4) { padding-right: 5px; text-align: right; }
  td { height: 16px; padding: 0 6px; border-right: 1px solid #efefef; border-bottom: 1px solid #efefef; text-align: right; white-space: pre; }
  td:nth-child(2) { background: #c2f397; }
  td:nth-child(4) { background: #f3d5d0; }
`;
const LadderRow = styled.tr<{ $alt: boolean; $c: string; $edge?: boolean; $mark?: 'last' | 'avg' }>`
  td:nth-child(3) {
    text-align: center;
    color: ${p => p.$c};
    background: ${p => (p.$mark === 'last' ? '#8cabff' : p.$alt ? '#efefef' : '#fff')};
    ${p => p.$mark === 'avg' && css`border: 1px solid #008000;`}
  }
  ${p => p.$edge && css`
    td, td:nth-child(n) { border-bottom: 4px double #777; line-height: 12px; }
  `}
`;

const asks = [1404, 691, 711, 602, 684, 1427, 621, 1054, 570, 275];
const bids = [208, 537, 578, 425, 509, 1004, 600, 762, 616, 473];
const ladder = Array.from({ length: 35 }, (_, i) => 2855 - i);
const flow = [[2, 6], [10, 8], [20, 11], [33, 8], [43, 15], [60, 6], [68, 5], [75, 8], [85, 7], [94, 1], [97, 6], [105, 3], [110, 7], [119, 15], [136, 8], [146, 22], [170, 9], [181, 8], [191, 10], [203, 9], [214, 20]];

const PinIcon = () => <svg width="8" height="10"><path d="M2.500 6V1.500h3V6M0 6.500h8M3.500 7v3" fill="none" stroke="#000" /><path d="M5 1h1v5H5z" /></svg>;
const CloseIcon = () => <svg width="9" height="8"><path d="M1 0.500l7 7M8 0.500l-7 7" stroke="#000" strokeWidth="1.500" /></svg>;

const StepButtons = ({ label, raised: r, w }: { label: string; raised?: boolean; w?: number }) => (
  <Steps $raised={r} $w={w}>
    <button type="button" aria-label={`${label} up`}><Tri $up /></button>
    <button type="button" aria-label={`${label} down`}><Tri /></button>
  </Steps>
);
const StepBox = styled.div<{ $push?: boolean }>`
  display: flex;
  justify-content: flex-end;
  align-self: ${p => (p.$push ? 'auto' : 'flex-start')};
  height: 26px;
  margin-right: -1px;
  margin-top: ${p => (p.$push ? 'auto' : '0')};
`;

const SpeedTrader = () => (
  <Trader>
    <Caption>FESX MAR11  - Paper - SpeedTrader<Fill /><button aria-label="Pin"><PinIcon /></button><button aria-label="Close"><CloseIcon /></button></Caption>
    <TraderTools>
      {['bolt', 'flagdoc', 'docgrid', 'arrowbox', 'hand', 'clock', 'fontA', 'alarm', 'istar'].map((n, i) => (
        <Tool key={n} $on={i === 0 || i === 2 || i === 3} aria-label={n}><Icon name={n} /></Tool>
      ))}
    </TraderTools>
    <TraderBody>
      <Order onSubmit={e => e.preventDefault()}>
        <OLabel $top={0} htmlFor="account">Account</OLabel>
        <Combo><select id="account" defaultValue="Paper"><option>Paper</option></select><ComboMark><Tri /></ComboMark></Combo>
        <StepRow><OLabel $top={0} htmlFor="last">Last:</OLabel><StepBox><StepButtons label="Scroll" raised w={17} /></StepBox></StepRow>
        <Value id="last" $c="#000">2837</Value>
        <OLabel htmlFor="size">Grandezza posizione</OLabel>
        <SizeBtn id="size" type="button">1</SizeBtn>
        <OLabel htmlFor="pl">P/L:</OLabel>
        <Value id="pl" $c="#008000">30.00</Value>
        <OLabel htmlFor="avg">Prezzo Medio:</OLabel>
        <Value id="avg" $c="#0000f0">2834</Value>
        <OLabel htmlFor="vol">Volume dell'ordine</OLabel>
        <VolRow><input id="vol" defaultValue="1" /><StepButtons label="Volume" /></VolRow>
        <Act type="button" $top={15} $dark>Flat</Act>
        <Act type="button">Reverse</Act>
        <Act type="button" $top={10} $w={64} $right $bg="#f3d5d0" $c="#a01818">Auto Ask</Act>
        <Act type="button" $w={63} $bg="#c2f397" $c="#184818">Auto Bid</Act>
        <Act type="button" $top={10}>Cancella Tutto</Act>
        <Act type="button">Cancella Asks</Act>
        <Act type="button">Cancella Bids</Act>
        <StepBox $push><StepButtons label="Page" raised w={17} /></StepBox>
      </Order>
      <Ladder>
        <svg width="100%" height="23" role="img" aria-label="Order flow">
          {flow.map(([x, w], i) => <rect key={x} x={x} y="1" width={w} height="21" fill={i < 10 ? '#40ff00' : i === 10 ? '#000' : '#ff5858'} />)}
        </svg>
        <LadderTable>
          <colgroup><col style={{ width: 41 }} /><col style={{ width: 40 }} /><col /><col style={{ width: 40 }} /><col style={{ width: 4 }} /></colgroup>
          <thead><tr><th>Me</th><th>Bid</th><th>Prezzo</th><th>Ask</th><th /></tr></thead>
          <tbody>
            {ladder.map((p, i) => (
              <LadderRow key={p} $alt={i % 2 === 1} $edge={p === 2838}
                $c={p > 2847 || p < 2828 ? '#808080' : p > 2837 ? '#8e1408' : '#1c4414'}
                $mark={p === 2837 ? 'last' : p === 2834 ? 'avg' : undefined}>
                <td /><td>{bids[2837 - p]}</td><td>{p === 2837 ? '2 @   2837' : p}</td><td>{asks[2847 - p]}</td><td />
              </LadderRow>
            ))}
          </tbody>
        </LadderTable>
      </Ladder>
    </TraderBody>
  </Trader>
);

/* ---------- brokerage ---------- */

const Status = styled.div`
  height: 20px;
  border-top: 1px solid #888;
  border-bottom: 1px solid #fff;
  padding-left: 4px;
  line-height: 18px;
  background: #f0ecec;
  color: #000;
  white-space: pre;
`;
const Brokerage = styled.section`
  margin-top: 3px;
  display: flex;
  flex-direction: column;
`;
const Inset = styled.div`
  margin-top: 2px;
  padding-left: 3px;
  border-top: 2px solid #a0d4fb;
`;
const BrokerTools = styled.div`
  display: flex;
  height: 23px;
  background: #f0f0f0;
`;
const BrokerStrip = styled.div`
  display: flex;
  padding: 0 2px 0 3px;
  background: ${BAR};
`;
const Positions = styled.table`
  width: 100%;
  table-layout: fixed;
  border-collapse: separate;
  border-spacing: 0;
  background: #fff;
  font: 11px/13px ${ARIAL};
  color: #000;
  th, td { overflow: hidden; white-space: pre; text-align: left; font-weight: normal; }
  th { height: 17px; padding: 0 0 0 5px; background: #f0efee; border: 1px solid #fff; border-right-color: #666; border-bottom: 2px solid #777; }
  td { height: 15px; padding: 0 0 0 5px; border-right: 1px solid #efefef; border-bottom: 1px solid #efefef; }
  td:first-child { padding-left: 3px; }
  tbody::before { content: ''; display: block; height: 2px; }
`;
const Th = styled.th<{ $r?: boolean }>`
  && { text-align: ${p => (p.$r ? 'right' : 'left')}; ${p => p.$r && 'padding-right: 5px;'} }
`;
const Td = styled.td<{ $r?: boolean; $m?: boolean; $bg?: string; $c?: string }>`
  && {
    text-align: ${p => (p.$r ? 'right' : p.$m ? 'center' : 'left')};
    ${p => p.$m && 'padding: 0;'}
    ${p => p.$r && 'padding-right: 6px;'}
    background: ${p => p.$bg ?? 'transparent'};
    color: ${p => p.$c ?? '#000'};
  }
  button { width: 100%; text-align: center; line-height: 13px; }
`;
const Totals = styled.div`
  display: flex;
  align-items: center;
  height: 20px;
  margin-top: 1px;
  background: #f0f0f0;
  padding-left: 3px;
  font: 12px/16px ${ARIAL};
  color: #000;
`;
const Total = styled.span<{ $w: number; $c?: string }>`
  width: ${p => p.$w}px;
  color: ${p => p.$c ?? '#000'};
`;
const Trades = styled.button`
  display: flex;
  align-items: center;
  gap: 2px;
  font-size: 11px;
`;
const BottomTabs = styled.div`
  display: flex;
  height: 24px;
  padding-left: 3px;
  border-top: 1px solid #1d4e9f;
  background: linear-gradient(#d3e8ff, #84b6ee);
  border-bottom: 2px solid #999;
`;
const BottomTab = styled.button<{ $on?: boolean }>`
  display: flex;
  align-items: center;
  gap: 3px;
  padding: 0 9px 0 3px;
  color: #75879d;
  white-space: nowrap;
  ${p => p.$on && css`
    width: 110px;
    padding-left: 1px;
    margin-top: -1px;
    color: #000;
    background: linear-gradient(#eff6ff, #a5dcfb);
    border-right: 1px solid #1d4e9f;
    border-bottom: 1px solid #1d4e9f;
  `}
`;

const cols: [string, number | undefined, boolean?][] = [
  ['Nome', 105], ['Simbolo', 92], ['Co...', 35], ['V...', 29], ['Exit', 47], ['Pos...', 39], ['Tradato', 57, true], ['Last', 60, true], ['P/L', 111, true],
  ['Cum. P/L', 70, true], ['Studio: Stato', 209], ['Ticker Sottostante', 103], ['Bid', 58, true], ['Ask', 60, true], ['Bid Vol', 60, true], ['Ask Vol', 60, true], ['', undefined],
];
const N = { $bg: NAVY, $c: '#fff' };
const G = { $bg: '#efefef' };

const BrokerPanel = () => (
  <Brokerage>
    <Caption>Nano-VirtualBrokerage - Paper<Fill /><button aria-label="Pin"><PinIcon /></button><button aria-label="Close"><CloseIcon /></button></Caption>
    <Inset>
      <BrokerTools>
        <BrokerStrip>
          <Tool aria-label="Open"><Icon name="folder" /></Tool><Rule $gap={2} />
          <Tool $on aria-label="Chart"><Icon name="chartwin" /></Tool>
          <Tool aria-label="Tools"><Icon name="hammer" /></Tool>
          <Tool $on aria-label="Stops"><Icon name="chartred" /></Tool><Rule />
          <Tool aria-label="Rows down"><Icon name="rowsdn" /></Tool>
          <Tool aria-label="Rows up"><Icon name="rowsup" /></Tool><Rule />
          <Tool aria-label="Steps"><Icon name="plusone" /></Tool><Rule />
          <Tool aria-label="Table"><Icon name="table3" /></Tool><Rule />
          <Tool aria-label="List settings"><Icon name="listgear" /></Tool>
          <Tool aria-label="Flag"><Icon name="flag" /></Tool><Rule />
          <Tool aria-label="List"><Icon name="list" /></Tool>
          <Tool aria-label="Book"><Icon name="book" /></Tool><Rule />
          <Tool aria-label="Delete"><Icon name="delbare" /></Tool><Rule />
          <Tool aria-label="Font"><Icon name="fontA" /></Tool>
          <Tool aria-label="Info"><Icon name="istaroff" /></Tool><Rule />
          <Tool aria-label="Alert"><Icon name="ex1" /></Tool>
          <Tool aria-label="Alerts"><Icon name="ex2" /></Tool><Rule />
          <Tool aria-label="Wave"><Icon name="wave" /></Tool>
          <Tool aria-label="Edit list"><Icon name="pmlist" /></Tool>
        </BrokerStrip>
      </BrokerTools>
      <Positions>
        <colgroup>{cols.map(([n, w]) => <col key={n} style={{ width: w }} />)}</colgroup>
        <thead><tr>{cols.map(([n, , r]) => <Th key={n} $r={r}>{n}</Th>)}</tr></thead>
        <tbody>
          <tr>
            <Td {...N}>FESX MAR11</Td><Td {...N}>FESX MAR11 ...</Td>
            <Td $m $bg="#80ff80"><button>Buy</button></Td><Td $m $bg="#ff8080"><button>Sell</button></Td><Td $m $bg="#e4e4ff"><button>Exit</button></Td>
            <Td $r {...N}>1</Td><Td $r {...N}>2834</Td><Td $r>2837</Td><Td $r $bg="#e0ffe0">30.00</Td><Td $r $bg="#ffe0e0">-10.00</Td>
            <Td $bg="#ffe4e1">guidaggallin: TradeGuard + Ordine auto...</Td><Td {...N}>FESX MAR11 (P...</Td>
            <Td $r>2837</Td><Td $r>2838</Td><Td $r {...N}>208</Td><Td $r {...N}>275</Td><Td />
          </tr>
          <tr>
            <Td {...G}>Euro-US Dollar Spot</Td><Td {...G}>EUR-USD</Td>
            <Td $m $bg="#80ff80"><button>Buy</button></Td><Td $m $bg="#ff8080"><button>Sell</button></Td><Td $m $bg="#e4e4ff"><button>Exit</button></Td>
            <Td $r {...G}>1</Td><Td $r {...G}>1.31454</Td><Td $r>1.31176</Td><Td $r $bg="#ffe0e0">-278.00</Td><Td $r $bg="#c6c6c6">n/a</Td>
            <Td $bg="#e4e4ff">TradeGuard: Disattivato</Td><Td {...G}>Euro/US Dollar S...</Td>
            <Td $r>1.31176</Td><Td $r $bg="#ffe8e4" $c="#500">1.31198</Td><Td $r {...G}>0</Td><Td $r {...G}>0</Td><Td />
          </tr>
          <tr>{cols.map(([n]) => <Td key={n} />)}</tr>
        </tbody>
      </Positions>
      <Totals>
        <Total $w={42}>Cash:</Total><Total $w={55}>USD</Total><Total $w={100} $c="#008000">49,990.00</Total>
        <Total $w={39}>P/L:</Total><Total $w={71} $c="#f00">-248.00</Total><Total $w={69}>Cum. P/L:</Total><Total $w={237} $c="#f00">-10.00</Total>
        <Trades><svg width="16" height="16"><circle cx="8" cy="8" r="6.500" fill="#94c828" stroke="#1c4a10" strokeWidth="2" /><path d="M5 8c0-3 2-4 4-4" fill="none" stroke="#e4ff90" strokeWidth="1.500" /></svg>Trades</Trades>
      </Totals>
    </Inset>
    <BottomTabs>
      <BottomTab $on><Icon name="posz" />Posizioni aperte</BottomTab>
      <BottomTab><Icon name="listgear" />Ordini in esecuzione</BottomTab>
      <BottomTab><Icon name="doc" />Ordini completati</BottomTab>
    </BottomTabs>
  </Brokerage>
);

/* ---------- page ---------- */

const Big = ({ icon, w, children }: { icon: string; w: number; children: string }) => (
  <BigButton $w={w}><Icon name={icon} />{children}</BigButton>
);
const T = ({ n, on, h }: { n: string; on?: boolean; h?: number }) => <Tool aria-label={n} $on={on} $h={h}><Icon name={n} /></Tool>;

export default function App() {
  return (
    <Page>
      <Global />
      <MenuBar>
        <Icon name="app" />
        <Menu>{['File', 'View', 'Extras', 'Portal', 'Help'].map(m => <button key={m}>{m}</button>)}</Menu>
        <WinButtons>
          <button aria-label="Minimize"><svg width="9" height="10"><path d="M1 8h6" stroke="#000" strokeWidth="2" /></svg></button>
          <button aria-label="Restore"><svg width="10" height="10" fill="none" stroke="#000"><path d="M3.500 3V1.500h5v4H7M1.500 4.500h5v4h-5zM3 2h6M1 5h6" /></svg></button>
          <button aria-label="Close"><CloseIcon /></button>
        </WinButtons>
      </MenuBar>
      <BigBar>
        <Grip />
        <Big icon="folder" w={100}>Apri un grafico</Big>
        <Big icon="saveall" w={70}>Salva tutto</Big>
        <Rule $gap={4} />
        <Big icon="pages" w={92}>PageManager</Big>
        <Caret $r={2} />
        <Big icon="grid" w={54}>Ricopri</Big>
        <Rule $gap={2} />
        <Big icon="dollar" w={88}>TradeWizard</Big>
        <Big icon="playback" w={92}>PlayBackWizard</Big>
        <Rule />
        <Big icon="speed" w={84}>SpeedTrader</Big>
        <Big icon="ts" w={80}>Time _Sales</Big>
        <Rule />
        <Big icon="news" w={106}>Barra delle News</Big>
        <Rule />
        <Big icon="help" w={32}>Su</Big>
      </BigBar>
      <Body>
        <Side><VTab $h={128}><Icon name="window" /><span>WorkspaceBar</span></VTab></Side>
        <Work>
          <TabStrip>
            <Tab $on>FESX MAR11  guidaggallin - Paper<CloseIcon /></Tab>
            <Tab>Euro-US Dollar Spot  TradeGuard - Paper</Tab>
            <Fill />
            <Caret $size={4} $c="#333" $r={2} />
          </TabStrip>
          <ToolRow>
            <ToolBar>
              <Grip />
              <Space />
              <T n="disk" /><Caret /><T n="folder" /><Caret /><Rule />
              <T n="indic" /><Caret /><T n="pie" /><Caret />
              <Field $w={54}><input aria-label="Interval" defaultValue="1" /><StepButtons label="Interval" /></Field>
              <Field $w={74} $ml={6}><select aria-label="Unit" defaultValue="Minuti"><option>Minuti</option></select><DropMark><Tri /></DropMark></Field>
              <Space />
              <T n="addpie" /><Rule />
              <T n="zoomin" /><T n="zoomout" /><T n="undo" /><T n="move" /><Rule />
              <T n="info" /><T n="lines" /><T n="xline" /><T n="yline" /><T n="layers" /><Rule />
              <T n="target" on /><T n="guard" on /><T n="equity" on />
            </ToolBar>
            <ToolBar>
              <Grip />
              <T n="speed" /><T n="chartdepth" /><T n="ts" /><T n="plusone" /><T n="buy" /><T n="sell" /><T n="hand" />
            </ToolBar>
          </ToolRow>
          <Middle>
            <ToolCol>
              <ToolStack>
                <Grip $flat />
                <T n="line" h={21} /><T n="bars" h={21} /><T n="candle" on h={21} /><T n="candles" h={21} /><hr />
                <T n="people" h={21} /><hr />
                <T n="log" h={21} />
              </ToolStack>
              <ToolStack>
                <Grip $flat />
                <T n="trend" h={21} /><T n="channel" h={21} /><T n="arc" h={21} /><T n="fib" h={21} /><hr />
                <T n="rect" h={21} /><T n="ellipse" h={21} /><T n="half" h={21} /><T n="text" h={21} /><hr />
                <T n="del" h={21} />
              </ToolStack>
            </ToolCol>
            <Designer><VTab $h={117}><Icon name="hammer" /><span>DesignerBar</span></VTab></Designer>
            <ChartCol>
              <Pane>
                <PriceCanvas />
                <Overlay>
                  <Legend>
                    <LegendHead><Key $c="#000" />[1 Min.] FESX MAR11  XEurex guidaggallin</LegendHead>
                    <li>Click Target  (60)</li>
                    <li>Click Stop  (30)</li>
                    <li><Key $c="#0000f0" />Crossing MA  (30, 100)</li>
                  </Legend>
                  <Stats>Pos: 1  P/L: 30.00  <em>CumP/L: -10.00</em> (EUR)<br />Risk: -300.00  Target: 600.00 (EUR)</Stats>
                  <Strategy>TradeGuard + Ordine automatico</Strategy>
                  <ExitBtn>Exit</ExitBtn>
                  <Broker><Icon name="chip" size={14} />Paper</Broker>
                  <LinkMark aria-label="Link"><LinkIcon /></LinkMark>
                </Overlay>
              </Pane>
              <ScrollBar>
                <ScrollEnd $w={15} aria-label="Scroll left">◀</ScrollEnd>
                <Track />
                <Thumb />
                <ScrollEnd $w={19} aria-label="Scroll right">▶</ScrollEnd>
              </ScrollBar>
              <Pane>
                <VolumeCanvas />
                <Overlay>
                  <Legend><VolumeKey><Key $c={NAVY} />[1 Min.] Volume  (0, 0, 0)</VolumeKey></Legend>
                  <Fill />
                  <LinkMark aria-label="Link volume"><LinkIcon /></LinkMark>
                </Overlay>
              </Pane>
            </ChartCol>
            <SpeedTrader />
          </Middle>
          <Status>29.12.10 Wed  11:44 data:   2837 [y =   2890]      O:   2838 C:   2837 H:   2838 L:   2837 V:24 Span: 0.04% 1 Ticks</Status>
          <BrokerPanel />
        </Work>
      </Body>
    </Page>
  );
}
